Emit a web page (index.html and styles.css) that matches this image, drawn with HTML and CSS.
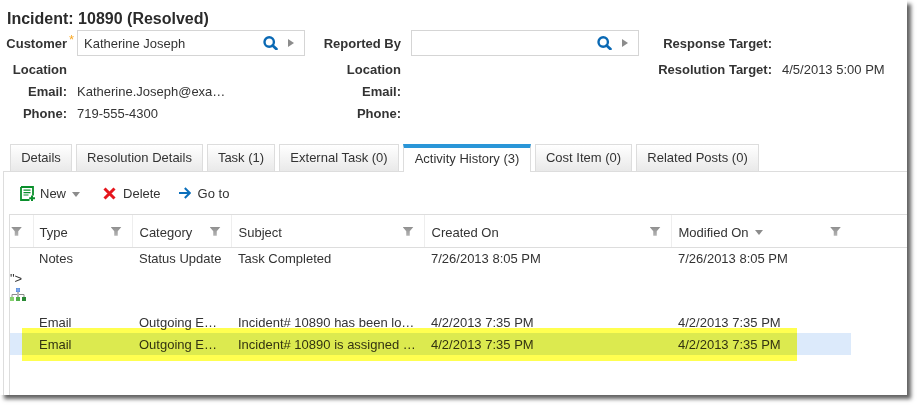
FILE: index.html
```html
<!DOCTYPE html>
<html lang="en">
<head>
<meta charset="utf-8">
<title>Incident 10890</title>
<link rel="stylesheet" href="styles.css">
</head>
<body>
<main class="sheet">
  <h1 class="title">Incident: 10890 (Resolved)</h1>
  <section class="form">
    <div class="label label-req">Customer<span class="req">*</span></div>
    <div class="lookup"><span class="lookup-text">Katherine Joseph</span>
      <svg class="search" viewBox="0 0 15 14" width="15" height="14"><circle cx="6.2" cy="6" r="4.7" fill="none" stroke="#0a69b4" stroke-width="2.4"/><path d="M9.6 9.4 13.4 13" stroke="#0a69b4" stroke-width="2.8" stroke-linecap="round"/></svg>
      <span class="play"></span>
    </div>
    <div class="label">Reported By</div>
    <div class="lookup"><span class="lookup-text"></span>
      <svg class="search" viewBox="0 0 15 14" width="15" height="14"><circle cx="6.2" cy="6" r="4.7" fill="none" stroke="#0a69b4" stroke-width="2.4"/><path d="M9.6 9.4 13.4 13" stroke="#0a69b4" stroke-width="2.8" stroke-linecap="round"/></svg>
      <span class="play"></span>
    </div>
    <div class="label">Response Target:</div>
    <div class="value"></div>

    <div class="label">Location</div>
    <div class="value"></div>
    <div class="label">Location</div>
    <div class="value"></div>
    <div class="label">Resolution Target:</div>
    <div class="value">4/5/2013 5:00 PM</div>

    <div class="label">Email:</div>
    <div class="value">Katherine.Joseph@exa…</div>
    <div class="label">Email:</div>
    <div class="value"></div>
    <div></div>
    <div></div>

    <div class="label">Phone:</div>
    <div class="value">719-555-4300</div>
    <div class="label">Phone:</div>
    <div class="value"></div>
    <div></div>
    <div></div>
  </section>

  <nav class="tabs">
    <span class="tab">Details</span>
    <span class="tab">Resolution Details</span>
    <span class="tab">Task (1)</span>
    <span class="tab">External Task (0)</span>
    <span class="tab tab-active">Activity History (3)</span>
    <span class="tab">Cost Item (0)</span>
    <span class="tab">Related Posts (0)</span>
  </nav>

  <section class="panel">
    <div class="toolbar">
      <span class="tool tool-new">
        <svg viewBox="0 0 15 15" width="15" height="15"><path d="M1 1H13V9.5M9.5 14H1V1" fill="none" stroke="#0a8f2c" stroke-width="1.8"/><path d="M3.5 4.2H10.5M3.5 6.6H10.5M3.5 9H8.5" stroke="#0a8f2c" stroke-width="1.2"/><path d="M12 9.5V15M9.2 12.2H15" stroke="#0a8f2c" stroke-width="2"/></svg>
        New<span class="caret"></span>
      </span>
      <span class="tool tool-delete">
        <svg viewBox="0 0 13 13" width="13" height="13"><path d="M1.5 1.5 11.5 11.5M11.5 1.5 1.5 11.5" stroke="#e5161d" stroke-width="3"/></svg>
        Delete
      </span>
      <span class="tool tool-go">
        <svg viewBox="0 0 12 12" width="12" height="12"><path d="M0 6H10M5.8 1 10.8 6 5.8 11" fill="none" stroke="#0b6fbb" stroke-width="2"/></svg>
        Go to
      </span>
    </div>

    <div class="grid">
      <table class="records">
        <colgroup>
          <col class="c-select"><col class="c-type"><col class="c-cat"><col class="c-subj"><col class="c-date"><col class="c-mod"><col class="c-rest">
        </colgroup>
        <thead>
          <tr>
            <th class="th-select"><span class="filter"></span></th>
            <th><div class="th-in"><span>Type</span><span class="filter"></span></div></th>
            <th><div class="th-in"><span>Category</span><span class="filter"></span></div></th>
            <th><div class="th-in"><span>Subject</span><span class="filter"></span></div></th>
            <th><div class="th-in"><span>Created On</span><span class="filter"></span></div></th>
            <th><div class="th-in"><span>Modified On<span class="sort"></span></span><span class="filter"></span></div></th>
            <th class="th-rest"></th>
          </tr>
        </thead>
        <tbody>
          <tr>
            <td></td><td>Notes</td><td>Status Update</td><td>Task Completed</td><td>7/26/2013 8:05 PM</td><td>7/26/2013 8:05 PM</td><td></td>
          </tr>
          <tr class="tree-row">
            <td colspan="7"><div class="stray">"&gt;</div>
              <svg class="tree" viewBox="0 0 16 13" width="16" height="13">
                <rect x="6.3" y=".3" width="3.4" height="3.4" fill="#7fa9ee" stroke="#4d83d6" stroke-width=".6"/>
                <path d="M2 9V6.5H14V9" fill="none" stroke="#8a8a8a"/>
                <rect x="7" y="4" width="2" height="5" fill="#b9b9b9"/>
                <rect x="0" y="9" width="4" height="4" fill="#86d06f"/>
                <rect x="6" y="9" width="4" height="4" fill="#4fae4a"/>
                <rect x="12" y="9" width="4" height="4" fill="#2a8a35"/>
              </svg>
            </td>
          </tr>
          <tr>
            <td></td><td>Email</td><td>Outgoing E…</td><td>Incident# 10890 has been lo…</td><td>4/2/2013 7:35 PM</td><td>4/2/2013 7:35 PM</td><td></td>
          </tr>
          <tr class="selected">
            <td></td><td>Email</td><td>Outgoing E…</td><td>Incident# 10890 is assigned …</td><td>4/2/2013 7:35 PM</td><td>4/2/2013 7:35 PM</td><td class="td-rest"></td>
          </tr>
        </tbody>
      </table>
      <div class="marker"></div>
    </div>
  </section>
</main>
</body>
</html>
```
FILE: styles.css
```css
* { box-sizing: border-box; }
html, body { margin: 0; padding: 0; background: #fff; }
body {
  width: 922px;
  height: 410px;
  overflow: hidden;
  font-family: "Liberation Sans", Arial, sans-serif;
  font-size: 13px;
  color: #333;
}
.sheet {
  width: 907px;
  height: 395px;
  background: #fff;
  box-shadow: 4px 4px 4px rgba(0, 0, 0, .62);
  overflow: hidden;
  display: flex;
  flex-direction: column;
  padding-top: 11px;
}
.title {
  margin: 0 0 3px 7px;
  height: 16px;
  font-size: 16px;
  line-height: 16px;
  font-weight: bold;
  color: #2b2b2b;
}
.form {
  display: grid;
  grid-template-columns: 67px 228px 86px 228px 123px 1fr;
  grid-template-rows: 26px 22px 22px 22px;
  column-gap: 10px;
  margin-bottom: 22px;
  height: 92px;
}
.label {
  position: relative;
  text-align: right;
  font-weight: bold;
  line-height: 28px;
  white-space: nowrap;
}
.value { line-height: 28px; white-space: nowrap; }
.req {
  position: absolute;
  left: 69px;
  top: -4px;
  color: #f9a825;
  font-weight: normal;
  font-size: 13px;
}
.lookup {
  display: flex;
  align-items: center;
  height: 26px;
  border: 1px solid #d5d5d5;
  padding: 0 10px 0 6px;
  background: #fff;
}
.lookup-text { flex: 1; }
.search { margin-right: 10px; }
.play {
  width: 0;
  height: 0;
  border-left: 6px solid #8c8c8c;
  border-top: 4.5px solid transparent;
  border-bottom: 4.5px solid transparent;
}
.tabs {
  display: flex;
  gap: 4px;
  margin-left: 10px;
  height: 27px;
  position: relative;
  z-index: 1;
}
.tab {
  height: 27px;
  line-height: 26px;
  text-align: center;
  border: 1px solid #ddd;
  border-bottom: 0;
  background: linear-gradient(#fff, #e9e9e9);
  white-space: nowrap;
}
.tab:nth-child(1) { width: 62px; }
.tab:nth-child(2) { width: 127px; }
.tab:nth-child(3) { width: 68px; }
.tab:nth-child(4) { width: 120px; }
.tab:nth-child(5) { width: 128px; }
.tab:nth-child(6) { width: 97px; }
.tab:nth-child(7) { width: 123px; }
.tab-active {
  height: 28px;
  border-top: 4px solid #2a96d8;
  background: #fff;
  line-height: 21px;
}
.panel {
  flex: 1;
  margin-left: 3px;
  border-top: 1px solid #ddd;
  border-left: 1px solid #ddd;
  display: flex;
  flex-direction: column;
  min-height: 0;
}
.toolbar {
  display: flex;
  align-items: center;
  height: 42px;
  padding-left: 16px;
}
.tool { display: flex; align-items: center; white-space: nowrap; }
.tool svg { margin-right: 7px; }
.tool-new svg { margin-right: 5px; }
.tool-delete { margin-left: 23px; }
.tool-go { margin-left: 18px; }
.caret {
  margin-left: 6px;
  margin-top: 2px;
  border-top: 5px solid #8c8c8c;
  border-left: 4.5px solid transparent;
  border-right: 4.5px solid transparent;
}
.grid {
  flex: 1;
  margin-left: 5px;
  border-top: 1px solid #ddd;
  border-left: 1px solid #ddd;
  position: relative;
}
.records {
  border-collapse: collapse;
  table-layout: fixed;
  width: 897px;
}
.c-select { width: 23px; }
.c-type { width: 99px; }
.c-cat { width: 99px; }
.c-subj { width: 193px; }
.c-date { width: 247px; }
.c-mod { width: 180px; }
.c-rest { width: 56px; }
th {
  height: 32px;
  padding: 3px 10px 0 7px;
  font-weight: normal;
  text-align: left;
  border-bottom: 1px solid #ddd;
  border-left: 1px solid #eee;
  vertical-align: middle;
}
th:nth-child(2), td:nth-child(2) { padding-left: 6px; }
.th-select { padding: 3px 0 0 1px; border-left: 0; }
.th-rest { border-left: 0; }
.th-in { display: flex; justify-content: space-between; align-items: center; }
.filter {
  display: block;
  position: relative;
  top: -1px;
  width: 11px;
  height: 9px;
  background: linear-gradient(#8f8f8f, #b5b5b5);
  clip-path: polygon(0 0, 100% 0, 66% 50%, 66% 100%, 34% 100%, 34% 50%);
}
.sort {
  display: inline-block;
  margin-left: 6px;
  vertical-align: 2px;
  border-top: 5px solid #8c8c8c;
  border-left: 4.5px solid transparent;
  border-right: 4.5px solid transparent;
}
td {
  height: 22px;
  padding: 0 6px 0 7px;
  white-space: nowrap;
  overflow: hidden;
}
.tree-row td { height: 42px; padding: 0; vertical-align: top; }
.stray { height: 15px; line-height: 15px; margin-top: 2px; }
.tree { display: block; margin-top: 2px; }
.selected td { background: #dceafb; }
.selected .td-rest { background: transparent; }
.marker {
  position: absolute;
  left: 12px;
  top: 113px;
  width: 775px;
  height: 33px;
  background: #ffff50;
  mix-blend-mode: multiply;
}
```
